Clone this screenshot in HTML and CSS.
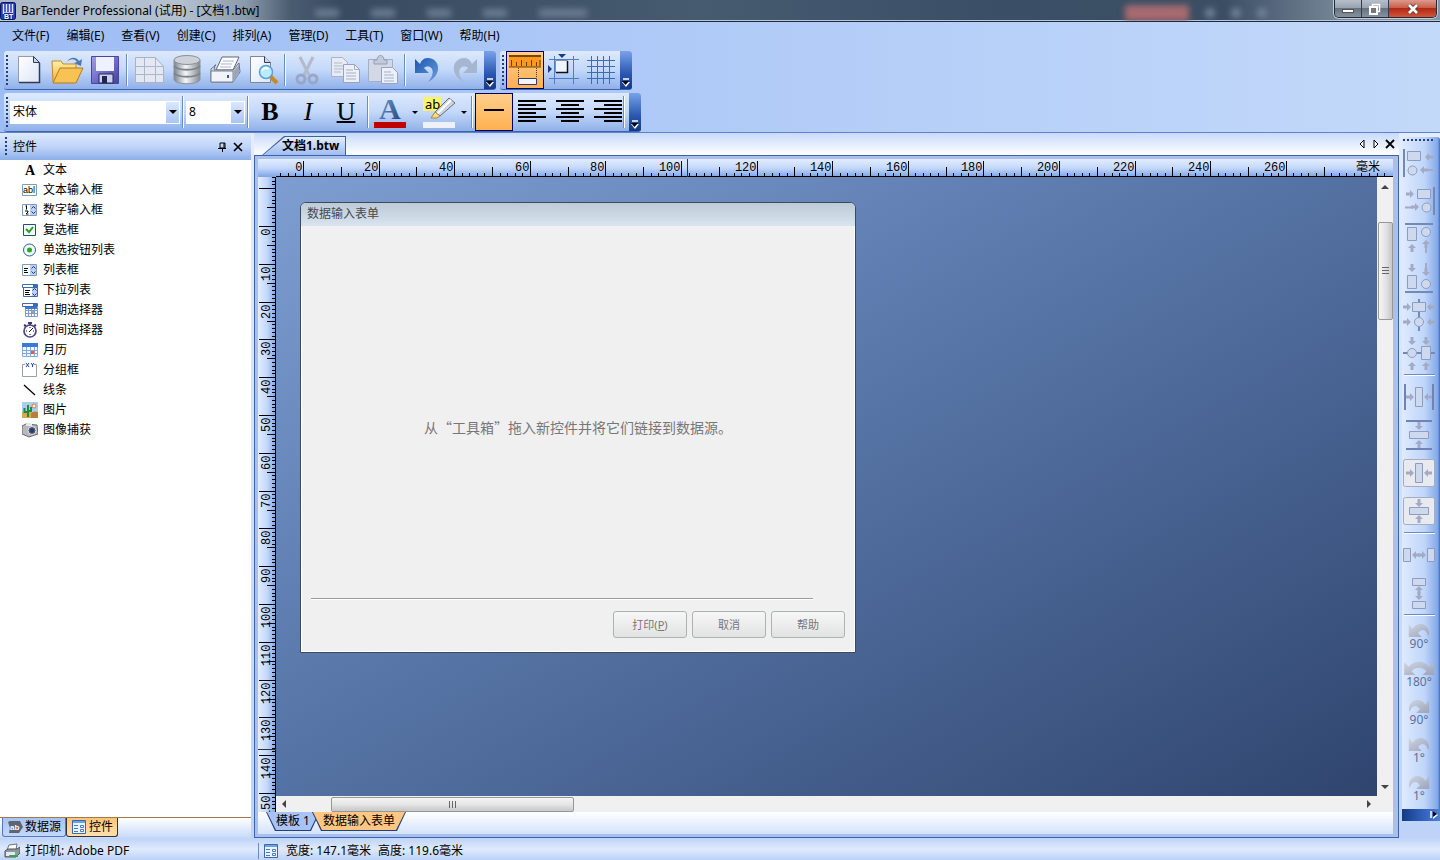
FILE: index.html
```html
<!DOCTYPE html>
<html lang="zh-CN">
<head>
<meta charset="utf-8">
<title>BarTender Professional (试用) - [文档1.btw]</title>
<link rel="stylesheet" href="styles.css">
</head>
<body>
<svg class="defs" aria-hidden="true">
  <defs>
    <linearGradient id="gPage" x1="0" y1="0" x2="1" y2="1"><stop offset="0" stop-color="#fff"/><stop offset="1" stop-color="#dde6f6"/></linearGradient>
    <linearGradient id="gFold" x1="0" y1="0" x2="0" y2="1"><stop offset="0" stop-color="#fff0a8"/><stop offset="1" stop-color="#eeb03c"/></linearGradient>
    <linearGradient id="gDb" x1="0" y1="0" x2="1" y2="0"><stop offset="0" stop-color="#7d848c"/><stop offset=".45" stop-color="#f4f6f8"/><stop offset="1" stop-color="#858b92"/></linearGradient>
    <linearGradient id="gDisk" x1="0" y1="0" x2="1" y2="1"><stop offset="0" stop-color="#a39df0"/><stop offset="1" stop-color="#4340a0"/></linearGradient>
    <linearGradient id="gUndo" x1="0" y1="0" x2="1" y2="1"><stop offset="0" stop-color="#1b55ac"/><stop offset="1" stop-color="#6f9fe0"/></linearGradient>
    <linearGradient id="gTurn" x1="0" y1="0" x2="1" y2="1"><stop offset="0" stop-color="#cfd5e2"/><stop offset="1" stop-color="#9aa3b8"/></linearGradient>
    <linearGradient id="gA" x1="0" y1="0" x2="1" y2="1"><stop offset="0" stop-color="#7ba4d8"/><stop offset="1" stop-color="#1d3f78"/></linearGradient>
    <symbol id="ar" viewBox="0 0 8 8"><path d="M0 2.500h4V0l4 4-4 4V5.500H0z" fill="#a3abc4"/></symbol>
    <symbol id="al" viewBox="0 0 8 8"><path d="M8 2.500H4V0L0 4l4 4V5.500h4z" fill="#a3abc4"/></symbol>
    <symbol id="au" viewBox="0 0 8 8"><path d="M2.500 8V4H0l4-4 4 4H5.500v4z" fill="#a3abc4"/></symbol>
    <symbol id="ad" viewBox="0 0 8 8"><path d="M2.500 0v4H0l4 4 4-4H5.500V0z" fill="#a3abc4"/></symbol>
    <symbol id="turnL" viewBox="0 0 24 14"><path d="M1 0v14h14l-4-4c4-6 9-4 11 3 4-10-9-19-17-8z" fill="url(#gTurn)"/></symbol>
    <symbol id="turnR" viewBox="0 0 24 14"><path d="M23 0v14H9l4-4C9 4 4 6 2 13-2 3 11-6 19 5z" fill="url(#gTurn)"/></symbol>
    <symbol id="form" viewBox="0 0 16 16"><path d="M1.500 1.500h13v13h-13z" fill="#e9f2ff" stroke="#3a67b0"/><path d="M2 2h12v2H2z" fill="#6f9fe6"/><path d="M3 6.500h4M3 9.500h4M3 12.500h4" stroke="#4a78bc"/><path d="M9.500 6.500h3v2h-3zM9.500 10.500h3v2h-3z" fill="#fff" stroke="#4a78bc"/></symbol>
  </defs>
</svg>

<div class="app">
  <header class="titlebar">
    <svg class="logo" viewBox="0 0 16 20"><rect x=".5" y="1.500" width="15" height="17" rx="2" fill="#2438b8" stroke="#0a1460"/><path d="M3.500 3v10M6.500 3v8M9.500 3v8M12.500 3v10M3 12h10" stroke="#dfe6ff" stroke-width="1.500"/><path d="M4 12h9v6H4z" fill="#1a2a90"/><text x="4" y="18" class="logo-text">BT</text></svg>
    <h1>BarTender Professional (试用) - [文档1.btw]</h1>
    <div class="glass" aria-hidden="true"><i></i><i></i><i></i><i></i><i></i><b></b><em></em><em></em><em></em></div>
    <div class="winbtns">
      <button aria-label="最小化"><svg viewBox="0 0 14 12"><rect x="1.500" y="6.500" width="11" height="3" fill="#fff" stroke="#555"/></svg></button>
      <button aria-label="还原"><svg viewBox="0 0 14 12"><path d="M4.500 1.500h7v7h-7z" fill="none" stroke="#fff" stroke-width="1.500"/><path d="M2 4h7v7H2z" fill="#777" stroke="#fff" stroke-width="2"/></svg></button>
      <button class="close" aria-label="关闭"><svg viewBox="0 0 14 12"><path d="M3 2l8 8M11 2l-8 8" stroke="#533" stroke-width="4.500"/><path d="M3 2l8 8M11 2l-8 8" stroke="#fff" stroke-width="2.800"/></svg></button>
    </div>
  </header>

  <nav class="menu">
    <button>文件(F)</button><button>编辑(E)</button><button>查看(V)</button><button>创建(C)</button><button>排列(A)</button><button>管理(D)</button><button>工具(T)</button><button>窗口(W)</button><button>帮助(H)</button>
  </nav>

  <div class="toolrow">
    <div class="toolbar">
      <span class="grip"></span>
      <button class="tb" aria-label="新建"><svg viewBox="0 0 32 32"><path d="M5.500 2.500h15l6 6v20h-21z" fill="url(#gPage)" stroke="#99a"/><path d="M26.500 9v19.500H6" fill="none" stroke="#333a55" stroke-width="1.500"/><path d="M20.500 2.500v6h6z" fill="#c8d6ee" stroke="#333a55"/></svg></button>
      <button class="tb" aria-label="打开"><svg viewBox="0 0 32 32"><path d="M1 7h9l2 3h13v18H2z" fill="url(#gFold)" stroke="#c48a28"/><path d="M9 14h23l-7 15H2z" fill="#f9c255" stroke="#b87b18"/><path d="M16 8c3-6 10-5 12-1l3-2-1 7-7-3 3-1c-3-4-7-3-10 0z" fill="#4d7ab0"/></svg></button>
      <button class="tb" aria-label="保存"><svg viewBox="0 0 32 32"><path d="M2.500 2.500h27v27h-27z" fill="url(#gDisk)" stroke="#4a46a0"/><path d="M7 3h18v14H7z" fill="#eef1ff"/><path d="M10 20h14v9H10z" fill="#c9d2ea" stroke="#222a60"/><path d="M13 22h5v7h-5z" fill="#26234e"/></svg></button>
      <span class="sep"></span>
      <button class="tb" aria-label="文档属性"><svg viewBox="0 0 32 32"><path d="M2.500 3.500h20l8 9v16h-28z" fill="#e3e8f3" stroke="#a9b2c6"/><path d="M22.500 3.500v9h8M11.500 4v24M3 12.500h19M3 20.500h27M22.500 13v15" fill="none" stroke="#adb6c9"/></svg></button>
      <button class="tb" aria-label="数据库"><svg viewBox="0 0 32 32"><path d="M3 6v20c3 5 23 5 26 0V6z" fill="url(#gDb)" stroke="#8c939b"/><ellipse cx="16" cy="6" rx="13" ry="4.500" fill="#cdd2d8" stroke="#8a9199"/><path d="M3 12c4 5 22 5 26 0M3 19c4 5 22 5 26 0" fill="none" stroke="#7c838b" stroke-width="2"/></svg></button>
      <button class="tb" aria-label="打印"><svg viewBox="0 0 32 32"><path d="M13 3h17l-6 13H7z" fill="#fff" stroke="#667"/><path d="M14 7h11M12 10h11M11 13h11" stroke="#a5b4d0"/><path d="M2 15l5-4h-1l-1 5h19l6-7 1 9-7 10H2z" fill="#dfe4ec" stroke="#6a7284"/><path d="M2 17h22v11H2z" fill="#f1f3f8" stroke="#7b8394"/><path d="M24 17l6-6v9l-6 8z" fill="#9da6b8"/><path d="M19 21v3" stroke="#2b56d0" stroke-width="2"/></svg></button>
      <button class="tb" aria-label="打印预览"><svg viewBox="0 0 32 32"><path d="M3.500 2.500h14l6 6v20h-20z" fill="url(#gPage)" stroke="#7b86a0"/><path d="M17.500 2.500v6h6" fill="#c8d6ee" stroke="#333a55"/><path d="M23 22l7 7" stroke="#c98a20" stroke-width="4"/><circle cx="19" cy="18" r="6.500" fill="#b9ecff" stroke="#5a9fd8" stroke-width="1.500"/><path d="M15 17c1-3 4-4 6-2" stroke="#fff" stroke-width="2" fill="none"/></svg></button>
      <span class="sep"></span>
      <button class="tb" aria-label="剪切"><svg viewBox="0 0 32 32"><path d="M9 3l9 18M22 3l-9 18" stroke="#b2bacb" stroke-width="3"/><circle cx="10" cy="25" r="4" fill="none" stroke="#9aa6c8" stroke-width="3"/><circle cx="22" cy="25" r="4" fill="none" stroke="#9aa6c8" stroke-width="3"/></svg></button>
      <button class="tb" aria-label="复制"><svg viewBox="0 0 32 32"><path d="M2.500 3.500h11l5 5v14h-16z" fill="#e6ebf5" stroke="#a8b2c8"/><path d="M5 9h8M5 12h9M5 15h9M5 18h7" stroke="#b0b9cc"/><path d="M14.500 10.500h11l5 5v13h-16z" fill="#edf0f8" stroke="#98a4bf"/><path d="M25.500 10.500v5h5M17 16h7M17 19h10M17 22h10M17 25h10" fill="none" stroke="#a5afc5"/></svg></button>
      <button class="tb" aria-label="粘贴"><svg viewBox="0 0 32 32"><path d="M1.500 5.500h24v22h-24z" fill="#d2d8e6" stroke="#a4aec4"/><path d="M7 10V6h3c0-6 7-6 7 0h3v4z" fill="#c3cad9" stroke="#949fb6"/><path d="M14.500 13.500h11l5 5v11h-16z" fill="#edf0f8" stroke="#98a4bf"/><path d="M17 18h7M17 21h10M17 24h10M17 27h10" stroke="#a5afc5"/></svg></button>
      <span class="sep"></span>
      <button class="tb" aria-label="撤消"><svg viewBox="0 0 32 32"><path d="M4 5v14h14l-5-5c6-5 14 3 4 14C33 20 28 3 16 4c-3 0-6 3-7 6z" fill="url(#gUndo)"/></svg></button>
      <button class="tb" aria-label="重做"><svg viewBox="0 0 32 32"><path d="M28 5v14H14l5-5c-6-5-14 3-4 14C-1 20 4 3 16 4c3 0 6 3 7 6z" fill="#a7b6d0"/></svg></button>
      <button class="more" aria-label="工具栏选项"><svg viewBox="0 0 10 10"><path d="M2 1h6" stroke="#fff" stroke-width="1.500"/><path d="M1 4h8L5 9z" fill="#fff"/><path d="M1 3h7L4.500 7z" fill="#000"/></svg></button>
    </div>
    <div class="toolbar">
      <span class="grip"></span>
      <button class="tb on" aria-label="标尺"><svg viewBox="0 0 32 32"><path d="M0 2h32" stroke="#7a4300" stroke-width="2"/><path d="M0 3h32v10H0z" fill="#f79a1e"/><path d="M0 13h32M2.500 6v6M7.500 8v4M12.500 6v6M17.500 8v4M22.500 6v6M27.500 8v4M31 6v6" stroke="#6b3b00"/><path d="M9.500 14v10M27.500 14v10" stroke="#5a3400" stroke-dasharray="1 1"/><path d="M9.500 24.500h18v6h-18z" fill="#f2f4fb" stroke="#333a66"/></svg></button>
      <button class="tb" aria-label="对齐参考线"><svg viewBox="0 0 32 32"><path d="M7.500 2v28M26.500 2v28M2 5.500h30M2 24.500h30" stroke="#4f7cc6"/><path d="M11 0h8l-4 4zM1 11v8l4-4z" fill="#1e3a86"/><path d="M8.500 6.500h12v12h-12z" fill="#eef3fd" stroke="#8a94a8"/><path d="M20.500 7v11.500H9" fill="none" stroke="#111" stroke-width="1.500"/></svg></button>
      <button class="tb" aria-label="网格"><svg viewBox="0 0 32 32"><path d="M6.500 2v28M12.500 2v28M18.500 2v28M24.500 2v28M2 6.500h28M2 12.500h28M2 18.500h28M2 24.500h28" stroke="#3a6bbd"/></svg></button>
      <button class="more" aria-label="工具栏选项"><svg viewBox="0 0 10 10"><path d="M2 1h6" stroke="#fff" stroke-width="1.500"/><path d="M1 4h8L5 9z" fill="#fff"/><path d="M1 3h7L4.500 7z" fill="#000"/></svg></button>
    </div>
  </div>

  <div class="toolrow">
    <div class="toolbar">
      <span class="grip"></span>
      <span class="combo wide"><select aria-label="字体"><option>宋体</option></select><span class="drop"></span></span>
      <span class="sep"></span>
      <span class="combo"><select aria-label="字号"><option>8</option></select><span class="drop"></span></span>
      <span class="sep"></span>
      <button class="tb serif b">B</button>
      <button class="tb serif i">I</button>
      <button class="tb serif u">U</button>
      <span class="sep"></span>
      <button class="tb" aria-label="字体颜色"><svg viewBox="0 0 32 32"><text x="5" y="23" class="big-a">A</text><path d="M0 26h32v6H0z" fill="#c00000"/></svg></button>
      <button class="caret" aria-label="字体颜色选项"></button>
      <button class="tb" aria-label="突出显示"><svg viewBox="0 0 32 32"><path d="M0 1h18v14H0z" fill="#fbf36a"/><text x="2" y="13" class="ab">ab</text><path d="M12 16L26 2l6 5-15 13z" fill="#cdd4e0" stroke="#667084"/><path d="M14 18L28 4" stroke="#fff" stroke-width="2"/><path d="M12 16l5 4-3 2H8z" fill="#f7dc90" stroke="#a8873a"/><path d="M0 26h32v6H0z" fill="#eef1fa"/></svg></button>
      <button class="caret" aria-label="突出显示选项"></button>
      <span class="sep"></span>
      <button class="tb on" aria-label="线条"><svg viewBox="0 0 32 32"><path d="M6 14h20" stroke="#000" stroke-width="2"/></svg></button>
      <button class="tb" aria-label="左对齐"><svg viewBox="0 0 32 32"><path d="M2 5h28M2 9h18M2 13h28M2 17h18M2 21h28M2 25h18" stroke="#000" stroke-width="2"/></svg></button>
      <button class="tb" aria-label="居中"><svg viewBox="0 0 32 32"><path d="M2 5h28M7 9h18M2 13h28M7 17h18M2 21h28M7 25h18" stroke="#000" stroke-width="2"/></svg></button>
      <button class="tb" aria-label="右对齐"><svg viewBox="0 0 32 32"><path d="M2 5h28M12 9h18M2 13h28M12 17h18M2 21h28M12 25h18" stroke="#000" stroke-width="2"/></svg></button>
      <span class="sep last"></span>
      <button class="more" aria-label="工具栏选项"><svg viewBox="0 0 10 10"><path d="M2 1h6" stroke="#fff" stroke-width="1.500"/><path d="M1 4h8L5 9z" fill="#fff"/><path d="M1 3h7L4.500 7z" fill="#000"/></svg></button>
    </div>
  </div>

  <main class="work">
    <aside class="panel">
      <header class="panel-head">
        <span class="grip"></span>
        <h2>控件</h2>
        <button aria-label="自动隐藏"><svg viewBox="0 0 10 10"><path d="M3 1h5v5H3zM1 6.500h8M5.500 7v3M7 1v5" fill="none" stroke="#000"/></svg></button>
        <button aria-label="关闭面板"><svg viewBox="0 0 10 10"><path d="M1 1l8 8M9 1L1 9" stroke="#000" stroke-width="1.700"/></svg></button>
      </header>
      <ul class="controls">
        <li><svg viewBox="0 0 16 16"><text x="3" y="13" class="ic-a">A</text></svg>文本</li>
        <li><svg viewBox="0 0 16 16"><path d="M.5 2.500h14v11H.5z" fill="#fff" stroke="#7f9db9"/><text x="1" y="11" class="ic-abl">abl</text></svg>文本输入框</li>
        <li><svg viewBox="0 0 16 16"><path d="M.5 2.500h14v11H.5z" fill="#fff" stroke="#7f9db9"/><path d="M8 3h6v10H8z" fill="#bcd0f5"/><path d="M9.500 6.500l2-2 2 2M9.500 9.500l2 2 2-2" fill="none" stroke="#1c3a80"/><path d="M4.500 3.500v4M3.500 4h1M3 9h3v1l-2 2h2.500" fill="none" stroke="#000"/></svg>数字输入框</li>
        <li><svg viewBox="0 0 16 16"><path d="M1.500 2.500h12v11h-12z" fill="#f6faf6" stroke="#1c5180"/><path d="M4 7l3 3 4-5" fill="none" stroke="#21a121" stroke-width="2"/></svg>复选框</li>
        <li><svg viewBox="0 0 16 16"><circle cx="7.500" cy="8" r="6" fill="#eef8f4" stroke="#2d6192"/><circle cx="7.500" cy="8" r="2.500" fill="#2aa52a"/></svg>单选按钮列表</li>
        <li><svg viewBox="0 0 16 16"><path d="M.5 2.500h14v11H.5z" fill="#fff" stroke="#7f9db9"/><path d="M8 3h6v10H8z" fill="#bcd0f5"/><path d="M9.500 6.500l2-2 2 2M9.500 9.500l2 2 2-2" fill="none" stroke="#1c3a80"/><path d="M2 6.500h4M2 8.500h3M2 10.500h4" stroke="#000"/></svg>列表框</li>
        <li><svg viewBox="0 0 16 16"><path d="M.5 2.500h15v3H.5zM1.500 5.500h14v9h-14z" fill="#fff" stroke="#3c6cab"/><path d="M11 2h4v3h-4z" fill="#3c6cab"/><path d="M10 6h5v8h-5z" fill="#bcd0f5"/><path d="M10.500 8.500l2-2 2 2M10.500 11.500l2 2 2-2" fill="none" stroke="#1c3a80"/><path d="M3 8.500h5M3 10.500h4M3 12.500h5" stroke="#000"/></svg>下拉列表</li>
        <li><svg viewBox="0 0 16 16"><path d="M.5 1.500h15v3H.5z" fill="#fff" stroke="#3c6cab"/><path d="M11 1h4v3h-4z" fill="#3c6cab"/><path d="M3.500 5.500h12v9h-12zM3.500 8.500h12M3.500 11.500h12M6.500 6v8M9.500 6v8M12.500 6v8" fill="#f4f8ff" stroke="#7d9cc9"/><path d="M3 5h12v2H3z" fill="#3d78d8"/><path d="M10 9h2v2h-2z" fill="#d89070"/></svg>日期选择器</li>
        <li><svg viewBox="0 0 16 16"><path d="M6 1h4M8 1v2M2 3l2 1M14 3l-2 1" stroke="#3a3a70" stroke-width="2"/><circle cx="8" cy="9" r="6" fill="#fff" stroke="#4a4688" stroke-width="1.700"/><path d="M7 10l4-4M4 9h1M8 5v1M12 9h-1M8 12v1" stroke="#111"/></svg>时间选择器</li>
        <li><svg viewBox="0 0 16 16"><path d="M.5 1.500h15v13H.5zM1 8.500h14M1 11.500h14M4.500 5v9M8.500 5v9M12.500 5v9" fill="#f4f8ff" stroke="#87a5d6"/><path d="M0 1h16v4H0z" fill="#3d78d8"/><path d="M9 9h3v3H9z" fill="#e2603a"/></svg>月历</li>
        <li><svg viewBox="0 0 16 16"><path d="M3 2.500H.5v12h14v-12H12" fill="#fff" stroke="#9a9fa8"/><path d="M4 1l3 4M7 1L4 5M9 1l1.500 2L12 1M10.500 3v2" fill="none" stroke="#1c46b0"/></svg>分组框</li>
        <li><svg viewBox="0 0 16 16"><path d="M2 3l11 10" stroke="#000" stroke-width="1.200"/></svg>线条</li>
        <li><svg viewBox="0 0 16 16"><path d="M0 0h16v16H0z" fill="#a9cdf0"/><path d="M0 10h16v6H0z" fill="#d9a850"/><path d="M9 12c2-3 5-3 7-1v5H9z" fill="#b7803a"/><circle cx="12" cy="4" r="2" fill="#fff" stroke="#e0703a"/><path d="M6 15V3M6 10H2.500V6M6 9h3V5" fill="none" stroke="#1e8a3a" stroke-width="2"/></svg>图片</li>
        <li><svg viewBox="0 0 16 16"><path d="M0 4l4-2 11 1 1 9-9 3-7-3z" fill="#b5b8bd" stroke="#65696f"/><path d="M4 2l2-1 4 1v2H4z" fill="#e6e8eb"/><circle cx="10" cy="8.500" r="4" fill="#4c5664" stroke="#e3e5e9"/><circle cx="10" cy="8.500" r="2" fill="#233c78"/></svg>图像捕获</li>
      </ul>
      <div class="dock-tabs">
        <button><svg viewBox="0 0 16 16"><path d="M1 3l2-1h10l3 6-4 6H2l1-5z" fill="#5d6672"/><text x="3" y="11" class="ic-tag">ab</text></svg>数据源</button><button class="on"><svg viewBox="0 0 16 16"><use href="#form"/></svg>控件</button>
      </div>
    </aside>

    <section class="doc">
      <div class="doc-tabs">
        <button class="doc-tab"><span>文档1.btw</span></button>
        <div class="doc-nav">
          <button aria-label="上一个"><svg viewBox="0 0 10 10"><path d="M7 1v8L3 5z" fill="#fff" stroke="#000"/></svg></button>
          <button aria-label="下一个"><svg viewBox="0 0 10 10"><path d="M3 1v8l4-4z" fill="#fff" stroke="#000"/></svg></button>
          <button aria-label="关闭文档"><svg viewBox="0 0 10 10"><path d="M1 1l8 8M9 1L1 9" stroke="#000" stroke-width="1.800"/></svg></button>
        </div>
      </div>
      <div class="frame">
        <div class="sheet">
          <div class="ruler-h"><svg id="rulerH"></svg><span>毫米</span></div>
          <div class="ruler-v"><svg id="rulerV"></svg></div>
          <div class="canvas">
            <div class="form">
              <h3>数据输入表单</h3>
              <p>从“工具箱”拖入新控件并将它们链接到数据源。</p>
              <hr>
              <div class="form-btns"><button>打印(<u>P</u>)</button><button>取消</button><button>帮助</button></div>
            </div>
          </div>
          <div class="scroll-v"><span class="tri up"></span><span class="thumb"></span><span class="tri down"></span></div>
          <div class="scroll-h"><span class="tri left"></span><span class="thumb"></span><span class="tri right"></span></div>
        </div>
        <div class="sheet-tabs"><button><span>模板 1</span></button><button class="on"><span>数据输入表单</span></button></div>
      </div>
    </section>

    <div class="side">
      <span class="grip-h"></span>
      <button class="tb" aria-label="左对齐对象"><svg viewBox="0 0 32 32"><path d="M1 2v28" stroke="#7389b8" stroke-width="2"/><path d="M4.500 4.500h13v9h-13z" class="ob"/><circle cx="9.500" cy="23.500" r="4.500" class="ob"/><use href="#al" x="22" y="6" width="8" height="8"/><path d="M18 23h12" class="ln"/><use href="#al" x="17" y="19" width="8" height="8"/></svg></button>
      <button class="tb" aria-label="右对齐对象"><svg viewBox="0 0 32 32"><path d="M31 2v28" stroke="#7389b8" stroke-width="2"/><path d="M14.500 4.500h13v9h-13z" class="ob"/><circle cx="23.500" cy="22.500" r="4.500" class="ob"/><use href="#ar" x="3" y="5" width="8" height="8"/><path d="M2 22.500h8" class="ln"/><use href="#ar" x="8" y="18" width="8" height="8"/></svg></button>
      <button class="tb" aria-label="顶端对齐"><svg viewBox="0 0 32 32"><path d="M2 1h28" stroke="#7389b8" stroke-width="2"/><path d="M4.500 4.500h9v13h-9z" class="ob"/><circle cx="23" cy="9" r="4.500" class="ob"/><use href="#au" x="5" y="21" width="8" height="8"/><path d="M23 22v8" class="ln"/><use href="#au" x="19" y="17" width="8" height="8"/></svg></button>
      <button class="tb" aria-label="底端对齐"><svg viewBox="0 0 32 32"><path d="M2 31h28" stroke="#7389b8" stroke-width="2"/><path d="M4.500 14.500h9v13h-9z" class="ob"/><circle cx="23" cy="23" r="4.500" class="ob"/><use href="#ad" x="5" y="3" width="8" height="8"/><path d="M23 2v8" class="ln"/><use href="#ad" x="19" y="7" width="8" height="8"/></svg></button>
      <button class="tb" aria-label="垂直居中线对齐"><svg viewBox="0 0 32 32"><path d="M16 0v32" stroke="#7389b8" stroke-width="2"/><path d="M9.500 3.500h13v9h-13z" class="ob"/><circle cx="16" cy="23" r="4.500" class="ob"/><use href="#ar" x="0" y="4" width="8" height="8"/><use href="#al" x="24" y="4" width="8" height="8"/><use href="#ar" x="0" y="19" width="8" height="8"/><use href="#al" x="24" y="19" width="8" height="8"/></svg></button>
      <button class="tb" aria-label="水平居中线对齐"><svg viewBox="0 0 32 32"><path d="M0 16h32" stroke="#7389b8" stroke-width="2"/><circle cx="9" cy="16" r="4.500" class="ob"/><path d="M18.500 9.500h9v13h-9z" class="ob"/><use href="#ad" x="5" y="0" width="8" height="8"/><use href="#ad" x="19" y="0" width="8" height="8"/><use href="#au" x="5" y="25" width="8" height="8"/><use href="#au" x="19" y="25" width="8" height="8"/></svg></button>
      <span class="sep-h"></span>
      <button class="tb" aria-label="左右居中于模板"><svg viewBox="0 0 32 32"><path d="M2 3v26M30 3v26" stroke="#6f83b5" stroke-width="2"/><path d="M12.500 6.500h7v19h-7z" class="ob"/><use href="#ar" x="3" y="12" width="8" height="8"/><use href="#al" x="21" y="12" width="8" height="8"/></svg></button>
      <button class="tb" aria-label="上下居中于模板"><svg viewBox="0 0 32 32"><path d="M3 2h26M3 30h26" stroke="#6f83b5" stroke-width="2"/><path d="M6.500 12.500h19v7h-19z" class="ob"/><use href="#ad" x="12" y="3" width="8" height="8"/><use href="#au" x="12" y="21" width="8" height="8"/></svg></button>
      <button class="tb" aria-label="左右居中于表单"><svg viewBox="0 0 32 32"><rect x=".5" y="2.500" width="31" height="27" rx="2" fill="#e8eaf0" stroke="#a3acc0"/><path d="M12.500 6.500h7v19h-7z" class="ob"/><use href="#ar" x="3" y="12" width="8" height="8"/><use href="#al" x="21" y="12" width="8" height="8"/></svg></button>
      <button class="tb" aria-label="上下居中于表单"><svg viewBox="0 0 32 32"><rect x=".5" y="2.500" width="31" height="27" rx="2" fill="#e8eaf0" stroke="#a3acc0"/><path d="M6.500 12.500h19v7h-19z" class="ob"/><use href="#ad" x="12" y="4" width="8" height="8"/><use href="#au" x="12" y="20" width="8" height="8"/></svg></button>
      <span class="sep-h"></span>
      <button class="tb" aria-label="横向分布"><svg viewBox="0 0 32 32"><path d="M.5 9.500h7v13h-7zM24.500 9.500h7v13h-7z" class="ob"/><use href="#al" x="9" y="12" width="8" height="8"/><use href="#ar" x="15" y="12" width="8" height="8"/></svg></button>
      <button class="tb" aria-label="纵向分布"><svg viewBox="0 0 32 32"><path d="M9.500 1.500h13v7h-13zM9.500 24.500h13v7h-13z" class="ob"/><use href="#au" x="12" y="9" width="8" height="8"/><use href="#ad" x="12" y="15" width="8" height="8"/></svg></button>
      <span class="sep-h"></span>
      <button class="tb rot"><svg viewBox="0 0 24 14"><use href="#turnL"/></svg>90°</button>
      <button class="tb rot"><svg viewBox="0 0 32 14"><path d="M0 0v14h12l-4-4c4-5 12-5 16 0l-4 4h12V0l-5 5C21-2 11-2 5 5z" fill="url(#gTurn)"/></svg>180°</button>
      <button class="tb rot"><svg viewBox="0 0 24 14"><use href="#turnR"/></svg>90°</button>
      <button class="tb rot"><svg viewBox="0 0 24 14"><use href="#turnL"/></svg>1°</button>
      <button class="tb rot"><svg viewBox="0 0 24 14"><use href="#turnR"/></svg>1°</button>
      <button class="more-h" aria-label="工具栏选项"><svg viewBox="0 0 10 10"><path d="M2 1v7" stroke="#fff" stroke-width="1.500"/><path d="M4 1v8l5-4z" fill="#fff"/><path d="M4 1v6l4-3z" fill="#000"/></svg></button>
    </div>
  </main>

  <footer class="status">
    <div class="printer"><svg viewBox="0 0 16 16"><path d="M5 2l8-1-1 6H3z" fill="#fff" stroke="#677"/><path d="M1 8l3-2h9l3-2v6l-4 4H1z" fill="#8f989e" stroke="#4d565c"/><path d="M2 9h9v4H2z" fill="#e6eaee"/><path d="M5 12h9v2H6z" fill="#3aa24a"/></svg>打印机: Adobe PDF</div>
    <div class="size"><svg viewBox="0 0 16 16"><use href="#form"/></svg><span>宽度: 147.1毫米</span><span>高度: 119.6毫米</span></div>
  </footer>
</div>
<script src="rulers.js"></script>
</body>
</html>
```
FILE: styles.css
```css
* { box-sizing: border-box; }
body { margin: 0; font: 12px/16px "Noto Sans", "Noto Sans CJK SC", sans-serif; color: #000; }
button { font: inherit; color: inherit; border: 0; padding: 0; background: none; }
svg { display: block; flex: none; overflow: hidden; }
h1, h2, h3, p, ul { margin: 0; padding: 0; font-size: inherit; font-weight: normal; }
.defs { position: absolute; width: 0; height: 0; }

.app { min-height: 100vh; display: flex; flex-direction: column; background: linear-gradient(90deg, #9ebdf5, #c3d9fa); }

/* title bar */
.titlebar { height: 22px; display: flex; align-items: center; gap: 5px; position: relative; overflow: hidden; border-bottom: 1px solid #1d2a3c; box-shadow: inset 0 -1px #b9c8dc; background: linear-gradient(90deg, #aab8c8 0, #b4c1cf 180px, #8b9bad 245px, #4a5c70 290px, #384b60 340px, #465a70 700px, #3a4f66 1000px, #3b4e63 85%, #7d8d9e 94%, #8796a6); }
.logo { width: 16px; height: 20px; }
.logo-text { font: bold 7px "Liberation Sans", sans-serif; fill: #fff; }
.titlebar h1 { position: relative; z-index: 1; padding-top: 1px; }
.glass { flex: 1; display: flex; align-items: center; gap: 32px; padding: 4px 62px 0 50px; filter: blur(3px); }
.glass i { width: 24px; height: 8px; background: #6a7c91; }
.glass i:nth-child(5) { width: 48px; }
.glass b { width: 64px; height: 16px; margin-left: auto; background: #a86a70; }
.glass em { width: 10px; height: 10px; margin-left: -16px; border-radius: 5px; background: #71859b; }
.winbtns { align-self: flex-start; display: flex; margin-right: 3px; border: 1px solid #222b36; border-top: 0; border-radius: 0 0 5px 5px; overflow: hidden; box-shadow: 0 0 0 1px #c2ccd6; }
.winbtns button { height: 17px; width: 27px; display: grid; place-items: center; border-right: 1px solid #333c48; background: linear-gradient(#b6bfca 0, #98a4b2 45%, #66737f 50%, #8492a0); }
.winbtns .close { width: 47px; border: 0; background: linear-gradient(#dd9a8c 0, #c95f4b 45%, #b32a12 50%, #d0553a); }
.winbtns svg { width: 14px; height: 12px; }

/* menu and tool bars */
.menu { height: 29px; display: flex; align-items: center; gap: 1px; padding: 0 4px; }
.menu button { padding: 4px 8px 6px; }
.toolrow { display: flex; gap: 4px; padding-left: 4px; margin-bottom: 3px; }
.toolrow + .toolrow { margin-bottom: 0; }
.toolbar { height: 39px; display: flex; align-items: center; border-bottom: 1px solid #3d63ac; border-radius: 3px; background: linear-gradient(#dde9fd, #c3d8fa 50%, #8fb0e8); overflow: hidden; }
.grip { width: 2px; height: 30px; margin: 0 2px; flex: none; background: repeating-linear-gradient(#274176 0 2px, transparent 2px 4px); }
.sep { width: 2px; height: 32px; margin: 0 2px; flex: none; background: linear-gradient(90deg, #6a8ccb 50%, #fff 50%); }
.sep.last { margin: 0 4px 0 -4px; }
.tb { width: 38px; height: 38px; display: grid; place-items: center; flex: none; }
.tb svg { width: 32px; height: 32px; overflow: visible; }
.tb.on { border: 1px solid #00006c; background: linear-gradient(#ffcf8c, #ffb050); }
.more { width: 12px; align-self: stretch; display: flex; align-items: flex-end; padding: 1px; background: linear-gradient(#78a2ea, #2a57b0 60%, #123a86); }
.more svg { width: 10px; height: 10px; }
.serif { font: 26px/36px "Liberation Serif", serif; }
.b { font-weight: bold; }
.i { font-style: italic; }
.u { text-decoration: underline; text-decoration-thickness: 2px; }
.big-a { font: bold 30px "Liberation Serif", serif; fill: url(#gA); }
.ab { font: 13px "Noto Sans", sans-serif; }
.caret { width: 11px; height: 38px; display: grid; place-items: center; }
.caret::before { content: ""; border: 3px solid transparent; border-top-color: #000; border-bottom: 0; }
.combo { width: 59px; height: 23px; display: flex; position: relative; background: #fff; }
.combo.wide { width: 170px; }
.combo select { appearance: none; border: 0; padding: 0 3px; width: 100%; font: inherit; color: #000; background: #fff; }
.drop { position: absolute; right: 1px; top: 1px; bottom: 1px; width: 13px; display: grid; place-items: center; background: linear-gradient(#dbe8fd, #a9c5f3); pointer-events: none; }
.drop::before { content: ""; border: 4px solid transparent; border-top-color: #000; border-bottom: 0; }

/* work area */
.work { flex: 1; display: grid; grid-template-columns: 251px 1fr 38px; column-gap: 3px; border-top: 1px solid #5f83c6; background: linear-gradient(#e3edfc, #bdd3f8); }
.panel { display: flex; flex-direction: column; background: #fff; }
.panel-head { height: 27px; display: flex; align-items: center; gap: 4px; padding: 0 7px 0 3px; background: linear-gradient(#dde9fd, #c0d5fa 50%, #8cafe9); }
.panel-head .grip { height: 20px; }
.panel-head h2 { flex: 1; }
.panel-head button { padding: 1px; }
.panel-head svg, .doc-nav svg { width: 10px; height: 10px; }
.controls { flex: 1; list-style: none; }
.controls li { height: 20px; display: flex; align-items: center; gap: 5px; padding-left: 22px; }
.controls svg, .dock-tabs svg, .status svg { width: 16px; height: 16px; }
.ic-a { font: bold 14px "Liberation Serif", serif; }
.ic-abl { font: 9px "Liberation Sans", sans-serif; }
.ic-tag { font: bold 8px "Liberation Sans", sans-serif; fill: #fff; }
.dock-tabs { height: 21px; display: flex; padding-left: 2px; border-top: 1px solid #a07c4c; background: linear-gradient(#fff, #c6d9f9); }
.dock-tabs button { height: 19px; display: flex; align-items: center; gap: 2px; padding: 0 4px; border: 1px solid #5478bb; border-top: 0; border-radius: 0 0 3px 3px; background: linear-gradient(#a8c4f6, #c3d7fa); }
.dock-tabs .on { border-color: #333; background: linear-gradient(#ffc47a, #ffe0ae); }

.doc { display: flex; flex-direction: column; min-width: 0; }
.doc-tabs { height: 22px; display: flex; align-items: flex-end; justify-content: space-between; padding-left: 8px; background: linear-gradient(#c8dafb, #fff); }
.doc-tab { height: 19px; font-weight: bold; display: grid; background: #3e62a8; padding: 1px 1px 0; clip-path: polygon(22px 0, 100% 0, 100% 100%, 0 100%); }
.doc-tab span { padding: 1px 6px 0 19px; background: linear-gradient(#e4edff, #9fbcf3); clip-path: polygon(22px 0, 100% 0, 100% 100%, 0 100%); }
.doc-nav { display: flex; align-self: center; gap: 4px; padding-right: 4px; }
.frame { flex: 1; display: flex; flex-direction: column; padding: 3px 5px 3px 3px; border: 1px solid #3f62aa; background: #a9c0ec; }
.sheet { flex: 1; display: grid; grid-template-columns: 18px 1fr 16px; grid-template-rows: 18px 1fr 16px; }
.ruler-h { grid-column: 1 / 4; display: flex; position: relative; background: linear-gradient(#e2edff, #c4d8fb 50%, #7da4e6); overflow: hidden; }
.ruler-h svg { width: 100%; height: 18px; }
.ruler-h span { position: absolute; right: 13px; top: 0; }
.ruler-v { grid-row: 2 / 4; position: relative; overflow: hidden; background: linear-gradient(90deg, #e2edff, #c4d8fb 50%, #7da4e6); }
.ruler-v svg { position: absolute; width: 18px; height: 100%; }
.ruler-text { font: 12px "Liberation Mono", monospace; }
.canvas { padding: 25px 24px; background: linear-gradient(150deg, #7e9ed2 0, #5775a7 45%, #2f456e 100%); }
.form { width: 556px; height: 451px; display: flex; flex-direction: column; border: 1px solid #40485a; border-radius: 6px 6px 0 0; background: #f0f0f0; overflow: hidden; box-shadow: inset 0 0 0 1px #fff; }
.form h3 { height: 23px; padding: 3px 6px; color: #45494f; background: linear-gradient(#bccbd7, #d8e4f0); }
.form p { flex: 1; display: grid; place-items: center; padding-top: 30px; font-family: "Noto Sans CJK SC", sans-serif; font-size: 14px; color: #777; }
.form hr { width: 502px; margin: 0 10px; border: 0; border-top: 1px solid #9c9c9c; border-bottom: 1px solid #fff; }
.form-btns { display: flex; justify-content: flex-end; gap: 5px; padding: 11px 10px 14px; }
.form-btns button { width: 74px; height: 27px; font-size: 11px; color: #777; border: 1px solid #adb2b5; border-radius: 3px; background: linear-gradient(#f6f6f6, #ededed 50%, #e2e2e2); }
.scroll-v, .scroll-h { display: flex; align-items: center; background: #f0f0f0; }
.scroll-v { flex-direction: column; padding: 8px 0 7px; }
.scroll-v .tri.down { margin-top: auto; }
.scroll-h { grid-column: 2 / 4; padding: 0 22px 0 6px; }
.scroll-h .tri.right { margin-left: auto; }
.tri { border: 4px solid transparent; flex: none; }
.up { border-top: 0; border-bottom-color: #444; }
.down { border-bottom: 0; border-top-color: #444; }
.left { border-left: 0; border-right-color: #444; }
.right { border-right: 0; border-left-color: #444; }
.thumb { display: grid; place-items: center; border: 1px solid #979797; border-radius: 2px; background: linear-gradient(#f5f5f5, #e4e4e4 50%, #c8c8c8); }
.scroll-v .thumb { width: 15px; height: 98px; margin-top: 33px; background: linear-gradient(90deg, #f5f5f5, #e4e4e4 50%, #c8c8c8); }
.scroll-h .thumb { width: 243px; height: 15px; margin-left: 45px; }
.thumb::before { content: ""; width: 8px; height: 7px; background: repeating-linear-gradient(90deg, #666 0 1px, transparent 1px 3px); }
.scroll-v .thumb::before { width: 7px; height: 8px; background: repeating-linear-gradient(#666 0 1px, transparent 1px 3px); }
.sheet-tabs { height: 22px; display: flex; padding-left: 8px; background: linear-gradient(#fff, #d4e2fb); }
.sheet-tabs button { height: 19px; display: grid; padding: 0 1px 1px; background: #24407c; clip-path: polygon(0 0, 100% 0, calc(100% - 9px) 100%, 9px 100%); }
.sheet-tabs span { padding: 1px 9px 0; background: #a8c3f6; clip-path: polygon(0 0, 100% 0, calc(100% - 9px) 100%, 9px 100%); }
.sheet-tabs .on { margin-left: -8px; }
.sheet-tabs .on span { padding: 1px 10px 0; background: #ffc783; }

.side { align-self: start; display: flex; flex-direction: column; align-items: center; margin-top: 4px; border-radius: 3px; background: linear-gradient(90deg, #dfeafe, #bfd5fa 60%, #83a8e8 94%, #3f6cc0); }
.side .tb { width: 34px; margin-right: 4px; }
.grip-h { width: 32px; height: 2px; margin: 2px 4px 3px 0; background: repeating-linear-gradient(90deg, #274176 0 2px, transparent 2px 4px); }
.sep-h { width: 31px; height: 2px; margin: 2px 4px 2px 0; background: linear-gradient(#6a8ccb 50%, #fff 50%); }
.ob { fill: #cfd9ee; stroke: #8d9cc0; }
.ln { stroke: #a3abc4; stroke-width: 2; }
.rot { font-size: 12px; line-height: 14px; color: #5e7199; align-content: center; }
.rot svg { height: 13px; }
.more-h { width: 100%; height: 12px; display: flex; justify-content: flex-end; padding: 1px; margin-top: 1px; background: linear-gradient(90deg, #123a86, #2a57b0 40%, #4f7fd6); }
.more-h svg { width: 10px; height: 10px; }

/* status bar */
.status { height: 22px; display: grid; grid-template-columns: 258px 1fr; align-items: center; padding-top: 3px; background: linear-gradient(#bdd3f8, #e0eafc 50%, #bcd2f8); }
.status div { display: flex; align-items: center; gap: 5px; padding-left: 4px; }
.status .size { border-left: 1px solid #6a8ccb; gap: 7px; }
```
FILE: rulers.js
```js
const NS = "http://www.w3.org/2000/svg";
const PX_PER_MM = 3.78;

function line(svg, x1, y1, x2, y2, color) {
  const el = document.createElementNS(NS, "path");
  el.setAttribute("d", `M${x1} ${y1}L${x2} ${y2}`);
  el.setAttribute("stroke", color || "#000");
  svg.append(el);
}

function label(svg, value, x, y, turn) {
  const el = document.createElementNS(NS, "text");
  el.setAttribute("class", "ruler-text");
  el.setAttribute("text-anchor", "end");
  el.setAttribute("x", x);
  el.setAttribute("y", y);
  if (turn) el.setAttribute("transform", `rotate(-90 ${x} ${y})`);
  el.textContent = value;
  svg.append(el);
}

/* Horizontal ruler: a tick every 2 mm, numbers every 20 mm */
const h = document.getElementById("rulerH");
for (let mm = -6; mm <= 286; mm += 2) {
  const x = Math.round(45 + mm * PX_PER_MM) + 0.5;
  const major = mm % 20 === 0 && mm < 280;
  line(h, x, major ? 2 : mm % 10 === 0 && mm < 280 ? 8 : 14, x, 18);
  if (major) label(h, mm, x - 1, 12);
}
line(h, 18, 17.5, 2400, 17.5);
line(h, 429.5, 0, 429.5, 18, "#333");

/* Vertical ruler: a tick every 1 mm, numbers every 10 mm */
const v = document.getElementById("rulerV");
for (let mm = -13; mm <= 155; mm++) {
  const y = Math.round(49 + mm * PX_PER_MM) + 0.5;
  const major = mm % 10 === 0;
  line(v, major ? 1 : mm % 5 === 0 ? 9 : 14, y, 18, y);
  if (major && mm >= 0) label(v, mm, 12, y + 2, true);
}
line(v, 17.5, 0, 17.5, 1600);
line(v, 0, 572.5, 18, 572.5, "#333");
```
